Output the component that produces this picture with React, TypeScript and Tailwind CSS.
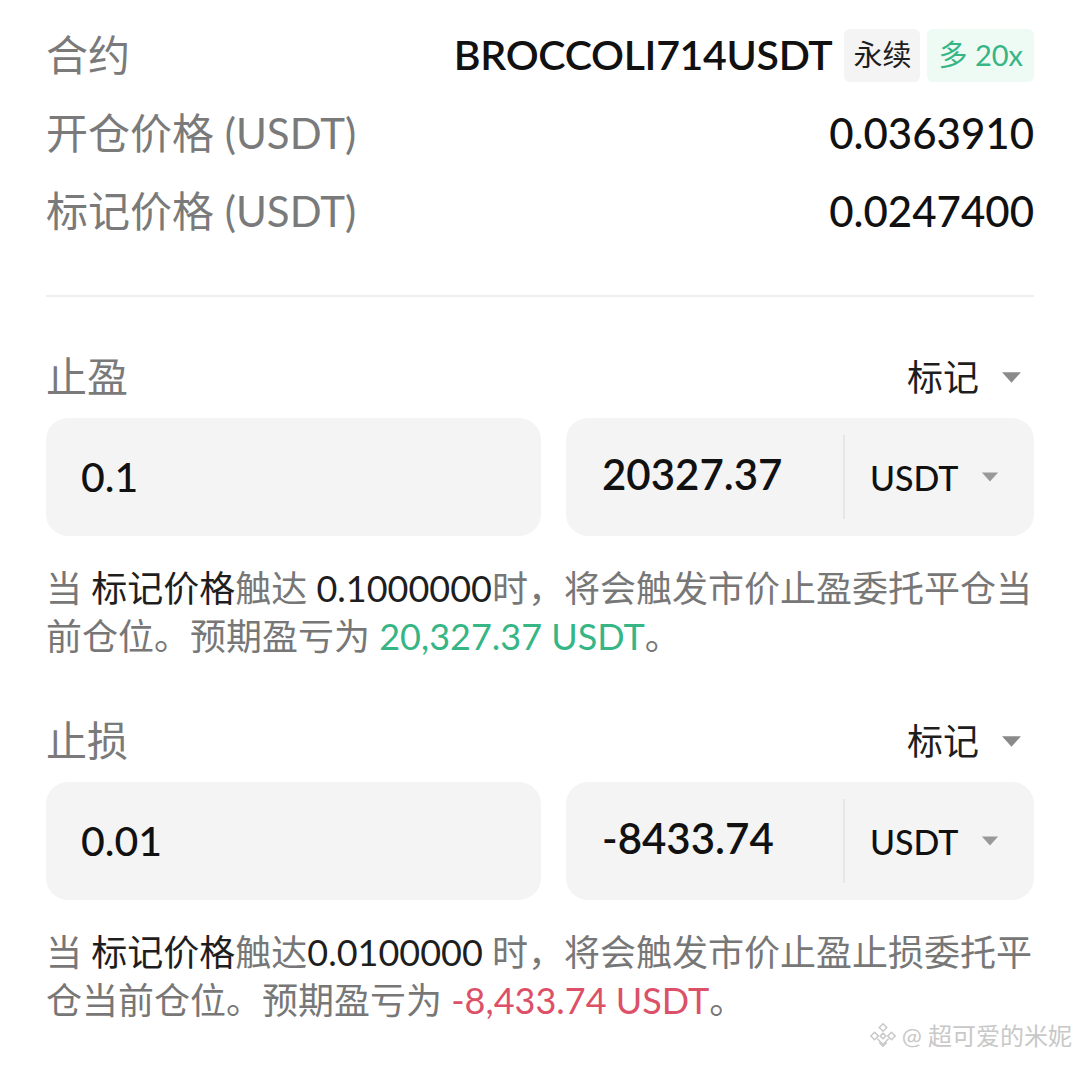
import React from "react";

const FONT = { fontFamily: "Lato, 'Noto Sans CJK SC', 'Noto Sans', sans-serif" };

function Caret({ className }: { className: string }) {
  return (
    <svg viewBox="0 0 20 12" className={className} fill="currentColor">
      <path d="M1 1 L19 1 L10 11 Z" />
    </svg>
  );
}

function InfoRow({ label, children }: { label: string; children: React.ReactNode }) {
  return (
    <div className="flex h-[78px] items-center justify-between">
      <span className="text-[42px] text-[#7a7a7a]">{label}</span>
      {children}
    </div>
  );
}

function Section({
  title,
  price,
  amount,
  desc,
}: {
  title: string;
  price: string;
  amount: string;
  desc: React.ReactNode;
}) {
  return (
    <div>
      <div className="flex h-[60px] items-center justify-between">
        <span className="text-[41px] text-[#7a7a7a]">{title}</span>
        <div className="flex items-center gap-[22px] pr-[12px]">
          <span className="text-[36px] text-[#1e1e1e]">标记</span>
          <Caret className="h-[13px] w-[21px] text-[#8a8a8a]" />
        </div>
      </div>
      <div className="mt-[11px] grid h-[118px] grid-cols-[495px_1fr] gap-[25px]">
        <div className="flex items-center rounded-[22px] bg-[#f4f4f4] pl-[35px]">
          <span className="text-[41px] font-medium text-[#111111]">{price}</span>
        </div>
        <div className="flex items-center rounded-[22px] bg-[#f4f4f4]">
          <div className="flex h-full flex-1 items-center pl-[36px] pb-[6px]">
            <span className="text-[42px] font-semibold text-[#111111]">{amount}</span>
          </div>
          <div className="h-[84px] w-[2px] bg-[#e6e6e6]" />
          <div className="flex w-[189px] items-center pl-[25px]">
            <span className="text-[34px] font-medium text-[#111111]">USDT</span>
            <Caret className="ml-[22px] h-[12px] w-[18px] text-[#999999]" />
          </div>
        </div>
      </div>
      <p className="mt-[28px] whitespace-nowrap text-[36px] leading-[48px] text-[#777777]">{desc}</p>
    </div>
  );
}

export default function App() {
  return (
    <div className="relative h-[1066px] w-[1080px] overflow-hidden bg-white" style={FONT}>
      <div className="px-[46px] pt-[16px]">
        <InfoRow label="合约">
          <div className="flex items-center">
            <span className="text-[41px] font-semibold tracking-[-0.3px] text-[#111111]">BROCCOLI714USDT</span>
            <span className="ml-[12px] flex h-[53px] items-center rounded-[6px] bg-[#f4f4f4] px-[9px] text-[29px] text-[#1e1e1e]">
              永续
            </span>
            <span className="ml-[7px] flex h-[53px] items-center rounded-[6px] bg-[#eefaf4] px-[11px] text-[29px] text-[#36b585]">
              多 20x
            </span>
          </div>
        </InfoRow>
        <InfoRow label="开仓价格 (USDT)">
          <span className="text-[42px] font-medium text-[#111111]">0.0363910</span>
        </InfoRow>
        <InfoRow label="标记价格 (USDT)">
          <span className="text-[42px] font-medium text-[#111111]">0.0247400</span>
        </InfoRow>
        <div className="mt-[45px] h-[2px] bg-[#eeeeee]" />
        <div className="mt-[50px]">
          <Section
            title="止盈"
            price="0.1"
            amount="20327.37"
            desc={
              <>
                当 <span className="text-[#1e1e1e]">标记价格</span>触达{" "}
                <span className="text-[#1e1e1e]">0.1000000</span>时，将会触发市价止盈委托平仓当
                <br />
                前仓位。预期盈亏为 <span className="text-[#36b585]">20,327.37 USDT</span>。
              </>
            }
          />
        </div>
        <div className="mt-[51px]">
          <Section
            title="止损"
            price="0.01"
            amount="-8433.74"
            desc={
              <>
                当 <span className="text-[#1e1e1e]">标记价格</span>触达
                <span className="text-[#1e1e1e]">0.0100000</span> 时，将会触发市价止盈止损委托平
                <br />
                仓当前仓位。预期盈亏为 <span className="text-[#dc5068]">-8,433.74 USDT</span>。
              </>
            }
          />
        </div>
      </div>
      <div className="absolute bottom-[12px] right-[8px] flex items-center gap-[4px] text-[24px] text-[#c8c8c8] [text-shadow:0_0_2px_#ffffff]">
        <svg viewBox="0 0 32 32" className="h-[30px] w-[30px]" fill="none" stroke="#c8c8c8" strokeWidth="1.6">
          <path d="M16 3 L20 7 L16 11 L12 7 Z" />
          <path d="M7 12 L11 16 L7 20 L3 16 Z" />
          <path d="M25 12 L29 16 L25 20 L21 16 Z" />
          <path d="M16 13 L19 16 L16 19 L13 16 Z" />
          <path d="M10 19 L16 25 L22 19" />
          <path d="M12 23 L16 27 L20 23" />
        </svg>
        <span>@ 超可爱的米妮</span>
      </div>
    </div>
  );
}
